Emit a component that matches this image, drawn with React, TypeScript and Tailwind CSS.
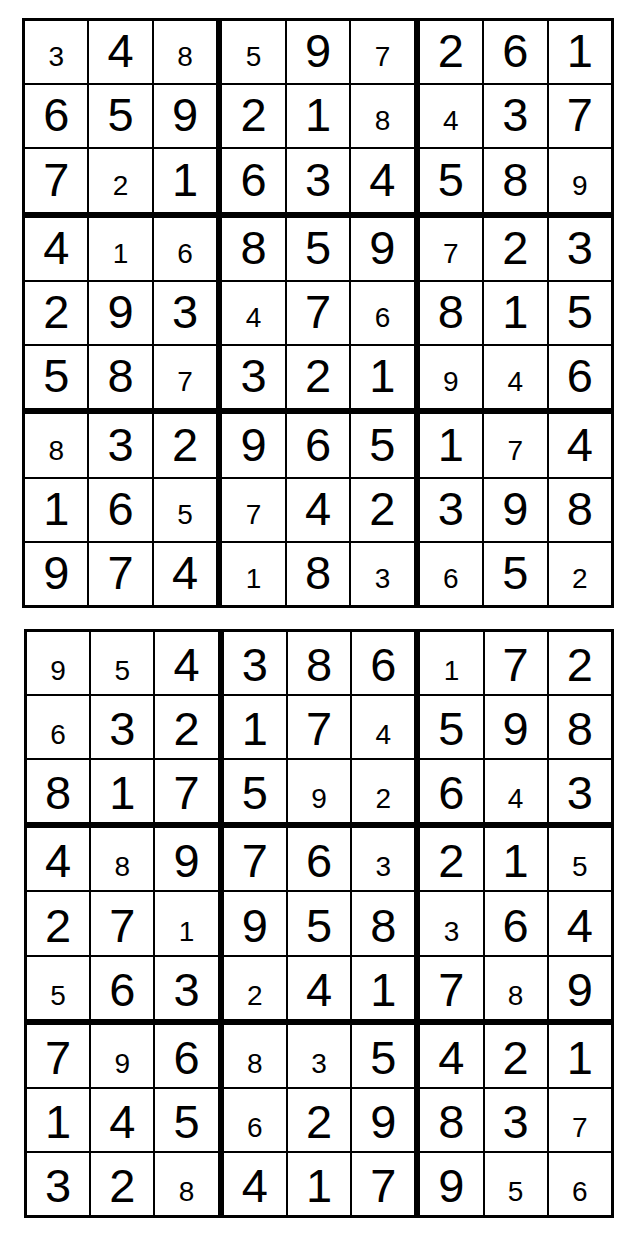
import React from "react";

const G1 = [
  "s3 4 s8 s5 9 s7 2 6 1",
  "6 5 9 2 1 s8 s4 3 7",
  "7 s2 1 6 3 4 5 8 s9",
  "4 s1 s6 8 5 9 s7 2 3",
  "2 9 3 s4 7 s6 8 1 5",
  "5 8 s7 3 2 1 s9 s4 6",
  "s8 3 2 9 6 5 1 s7 4",
  "1 6 s5 s7 4 2 3 9 8",
  "9 7 4 s1 8 s3 s6 5 s2",
];

const G2 = [
  "s9 s5 4 3 8 6 s1 7 2",
  "s6 3 2 1 7 s4 5 9 8",
  "8 1 7 5 s9 s2 6 s4 3",
  "4 s8 9 7 6 s3 2 1 s5",
  "2 7 s1 9 5 8 s3 6 4",
  "s5 6 3 s2 4 1 7 s8 9",
  "7 s9 6 s8 s3 5 4 2 1",
  "1 4 5 s6 2 9 8 3 s7",
  "3 2 s8 4 1 7 9 s5 s6",
];

function Board({
  data,
  first,
}: {
  data: string[];
  first: boolean;
}) {
  const rows = data.map((r) => r.split(" "));
  return (
    <div
      className={
        first
          ? "grid grid-cols-3 grid-rows-3 gap-[6px] bg-black border-[3px] border-black w-[592px] h-[590px] ml-[22px] mt-[18px]"
          : "grid grid-cols-3 grid-rows-3 gap-[6px] bg-black border-[3px] border-black w-[590px] h-[589px] ml-[24px] mt-[21px]"
      }
    >
      {Array.from({ length: 9 }).map((_, b) => (
        <div
          key={b}
          className="grid grid-cols-3 grid-rows-3 gap-[2px] bg-black"
        >
          {Array.from({ length: 9 }).map((_, c) => {
            const r = Math.floor(b / 3) * 3 + Math.floor(c / 3);
            const col = (b % 3) * 3 + (c % 3);
            const tok = rows[r][col];
            const small = tok.startsWith("s");
            const d = small ? tok.slice(1) : tok;
            return (
              <div
                key={c}
                className="bg-white flex items-end justify-center text-black"
              >
                {small ? (
                  <span
                    className={
                      first
                        ? "text-[28px] leading-none mb-[12px]"
                        : "text-[28px] leading-none mb-[9px]"
                    }
                  >
                    {d}
                  </span>
                ) : (
                  <span
                    className={
                      first
                        ? "text-[47px] leading-none mb-[9px]"
                        : "text-[47px] leading-none mb-[6px]"
                    }
                  >
                    {d}
                  </span>
                )}
              </div>
            );
          })}
        </div>
      ))}
    </div>
  );
}

export default function App() {
  return (
    <div
      className="w-[627px] h-[1237px] bg-white"
      style={{ fontFamily: '"Liberation Sans", Arial, sans-serif' }}
    >
      <Board data={G1} first={true} />
      <Board data={G2} first={false} />
    </div>
  );
}
